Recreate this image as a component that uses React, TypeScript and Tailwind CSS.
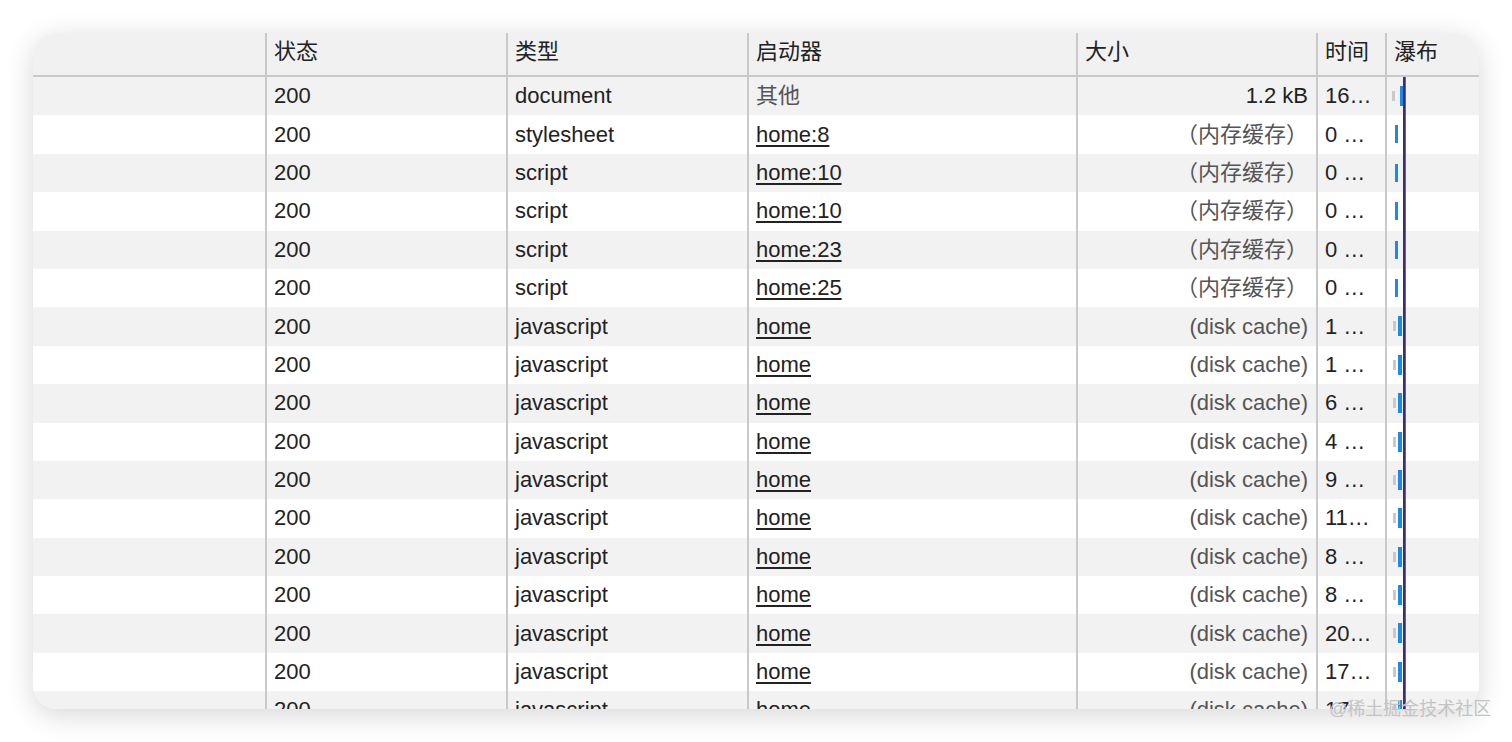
import React from "react";

type Row = {
  type: string;
  init: string;
  link: boolean;
  size: string;
  sizeGray: boolean;
  time: string;
  kind: "doc" | "mem" | "disk";
};

const MEM = "（内存缓存）";

const rows: Row[] = [
  { type: "document", init: "其他", link: false, size: "1.2 kB", sizeGray: false, time: "16…", kind: "doc" },
  { type: "stylesheet", init: "home:8", link: true, size: MEM, sizeGray: true, time: "0 …", kind: "mem" },
  { type: "script", init: "home:10", link: true, size: MEM, sizeGray: true, time: "0 …", kind: "mem" },
  { type: "script", init: "home:10", link: true, size: MEM, sizeGray: true, time: "0 …", kind: "mem" },
  { type: "script", init: "home:23", link: true, size: MEM, sizeGray: true, time: "0 …", kind: "mem" },
  { type: "script", init: "home:25", link: true, size: MEM, sizeGray: true, time: "0 …", kind: "mem" },
  { type: "javascript", init: "home", link: true, size: "(disk cache)", sizeGray: true, time: "1 …", kind: "disk" },
  { type: "javascript", init: "home", link: true, size: "(disk cache)", sizeGray: true, time: "1 …", kind: "disk" },
  { type: "javascript", init: "home", link: true, size: "(disk cache)", sizeGray: true, time: "6 …", kind: "disk" },
  { type: "javascript", init: "home", link: true, size: "(disk cache)", sizeGray: true, time: "4 …", kind: "disk" },
  { type: "javascript", init: "home", link: true, size: "(disk cache)", sizeGray: true, time: "9 …", kind: "disk" },
  { type: "javascript", init: "home", link: true, size: "(disk cache)", sizeGray: true, time: "11…", kind: "disk" },
  { type: "javascript", init: "home", link: true, size: "(disk cache)", sizeGray: true, time: "8 …", kind: "disk" },
  { type: "javascript", init: "home", link: true, size: "(disk cache)", sizeGray: true, time: "8 …", kind: "disk" },
  { type: "javascript", init: "home", link: true, size: "(disk cache)", sizeGray: true, time: "20…", kind: "disk" },
  { type: "javascript", init: "home", link: true, size: "(disk cache)", sizeGray: true, time: "17…", kind: "disk" },
  { type: "javascript", init: "home", link: true, size: "(disk cache)", sizeGray: true, time: "17…", kind: "disk" },
];

const font = { fontFamily: '"Liberation Sans", "Noto Sans CJK SC", Arial, sans-serif' };

function Waterfall({ kind }: { kind: Row["kind"] }) {
  return (
    <div className="relative h-full w-full">
      {kind === "doc" && (
        <>
          <div className="absolute left-[5px] top-[14px] h-[10px] w-[3px] bg-[#c9c9c9]" />
          <div className="absolute left-[13px] top-[9px] h-[20px] w-[4px] bg-[#1a8ce6]" />
        </>
      )}
      {kind === "mem" && <div className="absolute left-[8px] top-[10px] h-[18px] w-[3px] bg-[#1a8ce6]" />}
      {kind === "disk" && (
        <>
          <div className="absolute left-[6px] top-[14px] h-[10px] w-[3px] bg-[#c9c9c9]" />
          <div className="absolute left-[11px] top-[9px] h-[20px] w-[4px] bg-[#1a8ce6]" />
        </>
      )}
    </div>
  );
}

export default function App() {
  return (
    <div className="relative h-[742px] w-[1512px] overflow-hidden bg-white" style={font}>
      <div className="pl-[33px] pt-[33px]">
        <div className="relative h-[676px] w-[1446px] overflow-hidden rounded-[24px] bg-white shadow-[0_6px_28px_rgba(0,0,0,0.16)]">
          {/* header */}
          <div className="flex h-[44px] border-b-2 border-[#c9c9c9] bg-[#f1f1f2] text-[22px] text-[#222]">
            <div className="w-[232px]" />
            <div className="flex w-[241px] items-center border-l-2 border-[#c9c9c9] pb-[5px] pl-[7px]">状态</div>
            <div className="flex w-[241px] items-center border-l-2 border-[#c9c9c9] pb-[5px] pl-[7px]">类型</div>
            <div className="flex w-[329px] items-center border-l-2 border-[#c9c9c9] pb-[5px] pl-[7px]">启动器</div>
            <div className="flex w-[240px] items-center border-l-2 border-[#c9c9c9] pb-[5px] pl-[7px]">大小</div>
            <div className="flex w-[69px] items-center border-l-2 border-[#c9c9c9] pb-[5px] pl-[7px]">时间</div>
            <div className="flex w-[94px] items-center border-l-2 border-[#c9c9c9] pb-[5px] pl-[7px]">瀑布</div>
          </div>
          {/* body */}
          <div className="relative">
            {rows.map((r, i) => (
              <div
                key={i}
                className={`flex h-[38.4px] text-[22px] leading-none text-[#222] ${i % 2 === 0 ? "bg-[#f2f2f2]" : "bg-white"}`}
              >
                <div className="w-[232px]" />
                <div className="flex w-[241px] items-center border-l-2 border-[#c9c9c9] pl-[7px]">200</div>
                <div className="flex w-[241px] items-center border-l-2 border-[#c9c9c9] pl-[7px]">{r.type}</div>
                <div className="flex w-[329px] items-center border-l-2 border-[#c9c9c9] pl-[7px]">
                  {r.link ? (
                    <span className="underline decoration-[1.5px] underline-offset-[3px]">{r.init}</span>
                  ) : (
                    <span className="text-[#555]">{r.init}</span>
                  )}
                </div>
                <div
                  className={`flex w-[240px] items-center justify-end border-l-2 border-[#c9c9c9] pr-[8px] ${
                    r.sizeGray ? "text-[#555]" : ""
                  }`}
                >
                  {r.size}
                </div>
                <div className="flex w-[69px] items-center whitespace-nowrap border-l-2 border-[#c9c9c9] pl-[7px]">
                  {r.time}
                </div>
                <div className="w-[94px] border-l-2 border-[#c9c9c9]">
                  <Waterfall kind={r.kind} />
                </div>
              </div>
            ))}
            {/* waterfall marker line */}
            <div className="absolute bottom-0 left-[1370px] top-0 flex">
              <div className="w-[2px] bg-[#3a2f72]" />
              <div className="w-[1px] bg-[#c83a55]" />
            </div>
          </div>
        </div>
      </div>
      <div className="absolute left-[1329px] top-[700px] text-[18px] leading-none text-[#c4c4c4]">
        @稀土掘金技术社区
      </div>
    </div>
  );
}
